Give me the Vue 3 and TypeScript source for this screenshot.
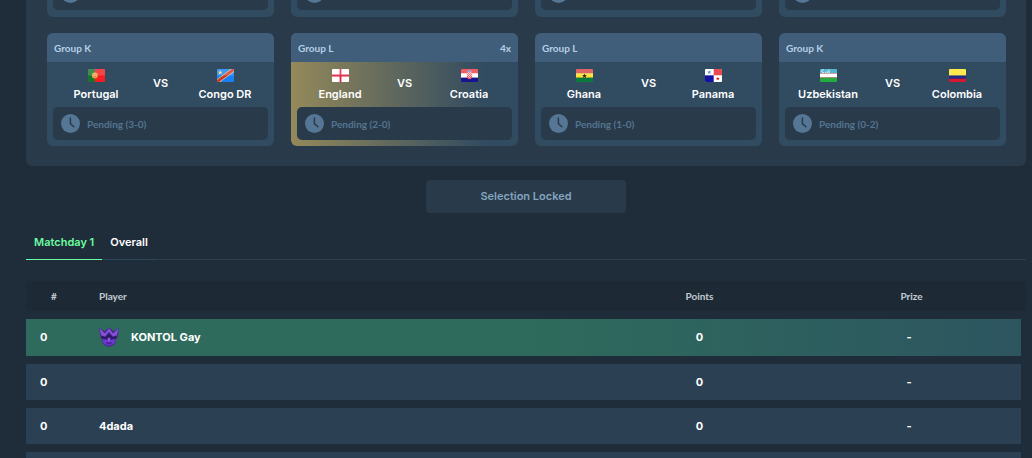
<script setup lang="ts">
import { ref } from 'vue'

interface Team { name: string; flag: string }
interface Match { group: string; home: Team; away: Team; score: string; boost?: string }
interface Row { rank: string; player: string; points: string; prize: string; me?: boolean }

const matches: Match[] = [
  { group: 'Group K', home: { name: 'Portugal', flag: 'pt' }, away: { name: 'Congo DR', flag: 'cd' }, score: '3-0' },
  { group: 'Group L', home: { name: 'England', flag: 'en' }, away: { name: 'Croatia', flag: 'hr' }, score: '2-0', boost: '4x' },
  { group: 'Group L', home: { name: 'Ghana', flag: 'gh' }, away: { name: 'Panama', flag: 'pa' }, score: '1-0' },
  { group: 'Group K', home: { name: 'Uzbekistan', flag: 'uz' }, away: { name: 'Colombia', flag: 'co' }, score: '0-2' },
]

const tabs = ['Matchday 1', 'Overall']
const activeTab = ref('Matchday 1')

const rows: Row[] = [
  { rank: '0', player: 'KONTOL Gay', points: '0', prize: '-', me: true },
  { rank: '0', player: '', points: '0', prize: '-' },
  { rank: '0', player: '4dada', points: '0', prize: '-' },
  { rank: '', player: '', points: '', prize: '' },
]
</script>

<template>
  <main class="page">
    <section class="panel">
      <div class="grid">
        <div v-for="n in 4" :key="n" class="card card-cut">
          <div class="pending">
            <svg class="clock" viewBox="0 0 19 19" aria-hidden="true">
              <circle cx="9.5" cy="9.5" r="9.5" />
              <path d="M9.4 4v5.6l3.5 3.2" />
            </svg>
          </div>
        </div>
        <article v-for="m in matches" :key="m.home.name" class="card" :class="{ boosted: m.boost }">
          <header class="card-head">
            <span>{{ m.group }}</span>
            <span v-if="m.boost">{{ m.boost }}</span>
          </header>
          <div class="card-body">
            <div class="versus">
              <template v-for="(t, i) in [m.home, m.away]" :key="t.name">
                <span v-if="i === 1" class="vs">VS</span>
                <div class="team">
                  <svg class="flag" viewBox="0 0 17 13" aria-hidden="true">
                    <g v-if="t.flag === 'pt'">
                      <path fill="#f51d22" d="M0 0h17v13H0z" />
                      <path fill="#16742c" d="M0 0h6.8v13H0z" />
                      <circle cx="6.8" cy="6.5" r="2.9" fill="#e9b33c" />
                      <path fill="#ea7a50" d="M5.4 5h2.8v2.4a1.4 1.4 0 0 1-2.8 0z" />
                      <path fill="#f4d9b8" d="M6.2 5.700h1.200v1.500H6.200z" />
                    </g>
                    <g v-else-if="t.flag === 'cd'">
                      <path fill="#1682f5" d="M0 0h17v13H0z" />
                      <path stroke="#f0c878" stroke-width="4.2" d="M-1 13.5 18-.5" />
                      <path stroke="#c8372f" stroke-width="2.8" d="M-1 13.5 18-.5" />
                      <path fill="#f2e269" d="m3.2 1.2.6 1.6h1.7l-1.3 1 .5 1.7-1.5-1-1.5 1 .5-1.7-1.3-1h1.7z" />
                    </g>
                    <g v-else-if="t.flag === 'en'">
                      <path fill="#fff" d="M0 0h17v13H0z" />
                      <path stroke="#e01f3d" stroke-width="1.8" d="M8.5 0v13M0 6.5h17" />
                    </g>
                    <g v-else-if="t.flag === 'hr'">
                      <path fill="#f13a3f" d="M0 0h17v4.4H0z" />
                      <path fill="#fff" d="M0 4.3h17v4.5H0z" />
                      <path fill="#17148f" d="M0 8.7h17V13H0z" />
                      <path fill="#f0606c" d="M5.900 2.600h5.200v5a2.600 2.600 0 0 1-5.200 0z" />
                      <path fill="#6f9fe0" d="m5.900 2.700.5-1.500 1 .6 1.100-1 1.100 1 1-.6.5 1.500z" />
                      <path fill="#ffc4c8" d="M7 3h1v1H7zM9 3h1v1H9zM6 4h1v1H6zM8 4h1v1H8zM10 4h1v1h-1zM7 5h1v1H7zM9 5h1v1H9zM6 6h1v1H6zM8 6h1v1H8zM10 6h1v1h-1zM7 7h1v1H7zM9 7h1v1H9zM8 8h1v1H8z" />
                    </g>
                    <g v-else-if="t.flag === 'gh'">
                      <path fill="#d84448" d="M0 0h17v4.4H0z" />
                      <path fill="#ffdf32" d="M0 4.3h17v4.5H0z" />
                      <path fill="#087a3c" d="M0 8.7h17V13H0z" />
                      <path fill="#201d13" d="m8.5 4.4.6 1.7h1.800L9.500 7.200l.5 1.800-1.500-1-1.500 1 .5-1.800L6.100 6.100h1.800z" />
                    </g>
                    <g v-else-if="t.flag === 'pa'">
                      <path fill="#fff" d="M0 0h17v13H0z" />
                      <path fill="#e2252d" d="M8.700 0H17v6.300H8.700z" />
                      <path fill="#1412a4" d="M0 6.300h8.700V13H0z" />
                      <path fill="#3f62c6" d="m4.300 1.400.5 1.200H6.200L5.200 3.500l.4 1.400-1.300-.9L3 4.900l.4-1.400-1-.9h1.400z" />
                      <path fill="#e2252d" d="m12.800 7.800.5 1.200h1.400l-1 .9.4 1.400-1.300-.9-1.300.9.4-1.400-1-.9h1.400z" />
                    </g>
                    <g v-else-if="t.flag === 'uz'">
                      <path fill="#2ba4c7" d="M0 0h17v4.300H0z" />
                      <path fill="#fff" d="M0 4.400h17v4H0z" />
                      <path fill="#22ae3e" d="M0 8.700h17V13H0z" />
                      <path stroke="#e66660" stroke-width=".5" d="M0 4.300h17M0 8.600h17" />
                      <path fill="none" stroke="#fff" stroke-width=".9" d="M3.800 1a1.400 1.400 0 1 0 0 2.500" />
                      <path fill="#fff" d="M5 2.700h1v1H5zM6.700 1.500h1v1h-1zM6.700 3h1v1h-1zM8.500.5h1v1h-1zM8.500 2h1v1h-1zM8.500 3.200h1v1h-1z" />
                    </g>
                    <g v-else>
                      <path fill="#ffe528" d="M0 0h17v6.700H0z" />
                      <path fill="#232a86" d="M0 6.600h17v3.300H0z" />
                      <path fill="#d81733" d="M0 9.800h17V13H0z" />
                    </g>
                    <path class="gloss" d="M0 0h17v6.500H0z" />
                  </svg>
                  <span>{{ t.name }}</span>
                </div>
              </template>
            </div>
            <div class="pending">
              <svg class="clock" viewBox="0 0 19 19" aria-hidden="true">
                <circle cx="9.5" cy="9.5" r="9.5" />
                <path d="M9.4 4v5.6l3.5 3.2" />
              </svg>
              <span>Pending ({{ m.score }})</span>
            </div>
          </div>
        </article>
      </div>
    </section>

    <button class="locked" type="button" disabled>Selection Locked</button>

    <nav class="tabs" role="tablist">
      <button
        v-for="tab in tabs"
        :key="tab"
        type="button"
        role="tab"
        class="tab"
        :class="{ active: tab === activeTab }"
        :aria-selected="tab === activeTab"
        @click="activeTab = tab"
      >{{ tab }}</button>
    </nav>

    <table class="board">
      <colgroup>
        <col class="c-rank"><col class="c-player"><col class="c-points"><col><col class="c-end">
      </colgroup>
      <thead>
        <tr>
          <th scope="col">#</th>
          <th scope="col" class="player">Player</th>
          <th scope="col">Points</th>
          <th scope="col" colspan="2">Prize</th>
        </tr>
      </thead>
      <tbody>
        <tr v-for="(r, i) in rows" :key="i" :class="{ me: r.me }">
          <td class="rank">{{ r.rank }}</td>
          <td class="player">
            <div class="who">
              <svg v-if="r.me" class="badge" viewBox="0 0 20 20" aria-hidden="true">
                <path fill="#43278a" d="M0 .8 5.500 4.200 10 .2l4.500 4L20 .8l-1.700 10.400-1.500.8-.3 4Q13.500 19.800 10 19.800T3.500 16l-.3-4-1.500-.8z" />
                <path fill="#8650d6" d="M.3 1 6 6.500 10 1l4 5.500L19.700 1l-1.900 7.500-3.900 1L10 4.800 6.100 9.500l-3.900-1z" />
                <path fill="#2c185f" d="m2.300 8.800 4 1.500L10 6.800l3.700 3.500 4-1.500-.5 2.400-4.400 1H7.200l-4.400-1z" />
                <path fill="#6c38cf" d="m3.700 12 3.900.8h4.800l3.900-.8-.3 3.700Q13.500 18.800 10 18.800T4 15.700z" />
                <path fill="#4b259d" d="M6.500 15.300h7L12 17.600H8z" />
                <path fill="#9259ea" d="M8.600 10.800h2.800l-.7 3.400H9.300z" />
              </svg>
              <span>{{ r.player }}</span>
            </div>
          </td>
          <td>{{ r.points }}</td>
          <td>{{ r.prize }}</td>
        </tr>
      </tbody>
    </table>
  </main>
</template>

<style>
html,
body {
  background: #1f2d3b;
  overflow: hidden;
}
</style>

<style scoped>
.page {
  box-sizing: border-box;
  height: 100vh;
  overflow: hidden;
  padding: 0 6px 0 26px;
  background: #1f2d3b;
  color: #fff;
  font-family: Inter, 'Liberation Sans', sans-serif;
  font-size: 11px;
  font-weight: 600;
  line-height: 16px;
}

.panel {
  padding: 0 20px 20px 21px;
  background: #293a4b;
  border-radius: 0 0 6px 6px;
}

.grid {
  display: grid;
  grid-template-columns: repeat(4, 1fr);
  gap: 16px 17px;
}

.card {
  overflow: hidden;
  background: #314b60;
  border-radius: 6px;
}

.card-cut {
  margin-top: -23px;
  padding: 0 6px 7px;
}

.boosted {
  background: linear-gradient(90deg, #94895a, #314b60 85%);
}

.card-head {
  display: flex;
  justify-content: space-between;
  padding: 7px 7px 6px;
  background: #405d79;
  color: #b5d0e6;
}

.card-head,
.pending,
th {
  font-family: Lato, 'Liberation Sans', sans-serif;
  font-size: 10px;
  font-weight: 700;
}

.card-body {
  padding: 7px 6px 6px;
}

.versus {
  display: flex;
  padding-bottom: 5px;
}

.team {
  flex: 2 1 0;
  display: flex;
  flex-direction: column;
  align-items: center;
  gap: 4px;
}

.flag {
  width: 17px;
  height: 13px;
  border-radius: 1px;
}

.gloss {
  fill: #fff;
  opacity: 0.18;
}

.vs {
  flex: 1 1 0;
  padding-top: 6px;
  text-align: center;
}

.pending {
  box-sizing: border-box;
  display: flex;
  align-items: center;
  gap: 7px;
  height: 33px;
  padding: 0 8px;
  background: #293a4b;
  border-radius: 5px;
  color: #54758f;
}

.clock {
  width: 19px;
  height: 19px;
}

.clock circle {
  fill: #557695;
}

.clock path {
  fill: none;
  stroke: #293a4b;
  stroke-width: 1.5;
  stroke-linecap: round;
}

.locked {
  display: block;
  width: 200px;
  height: 33px;
  margin: 14px auto 0;
  padding: 0 0 2px;
  border: 0;
  border-radius: 4px;
  background: #293a4b;
  color: #84a5be;
  font: inherit;
}

.tabs {
  display: flex;
  margin-top: 12px;
  box-shadow: inset 0 -1px #2c3f50;
}

.tab {
  padding: 9px 8px;
  border: 0;
  border-bottom: 1px solid #304759;
  background: none;
  color: #fff;
  font: inherit;
  line-height: 16px;
}

.tab.active {
  border-color: #6bfc9f;
  color: #6bfc9f;
}

.board {
  width: 100%;
  margin-top: 13px;
  table-layout: fixed;
  border-collapse: separate;
  border-spacing: 0 8px;
  text-align: center;
}

.c-rank {
  width: 56px;
}

.c-player {
  width: 52%;
}

.c-points {
  width: 195px;
}

.c-end {
  width: 5px;
}

th,
td {
  padding: 0;
}

th {
  height: 30px;
  background: #1d2a36;
  color: #c3cbd2;
}

td {
  height: 36px;
  background: #2b4153;
  font-weight: 700;
}

.me {
  background: linear-gradient(90deg, #2e6b5c 50%, #2d5560);
}

.me td {
  padding-bottom: 1px;
  background: none;
}

.rank {
  padding-left: 14px;
  text-align: left;
}

.player {
  padding-left: 17px;
  text-align: left;
}

.who {
  display: flex;
  align-items: center;
  gap: 12px;
}

.badge {
  width: 20px;
  height: 20px;
}
</style>
